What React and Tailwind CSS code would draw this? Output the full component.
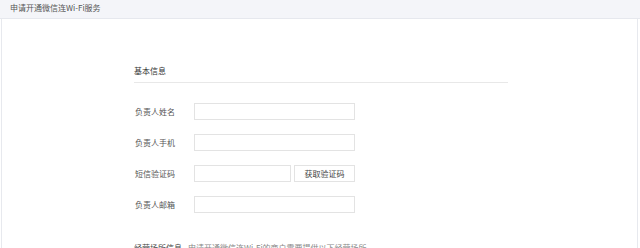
import React from "react";

const font = {
  fontFamily: '"Noto Sans CJK SC", "Noto Sans", "Liberation Sans", sans-serif',
};

const fields = [
  { label: "负责人姓名", name: "name" },
  { label: "负责人手机", name: "phone" },
  { label: "短信验证码", name: "code", withButton: true },
  { label: "负责人邮箱", name: "email" },
];

const App = () => {
  return (
    <div
      className="w-[640px] h-[248px] overflow-hidden bg-white text-[#444] flex flex-col"
      style={font}
    >
      <div className="h-[19px] shrink-0 bg-[#f4f5f9] border-b border-[#e6e8ee] pl-[10px] flex items-center text-[8px] leading-[10px] text-[#555] pb-[3px]">
        申请开通微信连Wi-Fi服务
      </div>
      <div className="flex-1 ml-[1px] mr-[2px] border-x border-[#e7e9ee] bg-white pl-[132px] pt-[47px]">
        <div className="w-[374px] border-b border-[#e8e8e8] pb-[6px] text-[8px] leading-[10px] text-[#333]">
          基本信息
        </div>
        <div className="flex flex-col gap-[14px] pt-[20px]">
          {fields.map((f) => (
            <div key={f.name} className="flex items-center h-[17px]">
              <span className="w-[60px] shrink-0 text-[8px] leading-[10px] text-[#555] pl-[1px]">
                {f.label}
              </span>
              {f.withButton ? (
                <div className="flex gap-[3px]">
                  <input
                    type="text"
                    name={f.name}
                    className="w-[97px] h-[17px] border border-[#e3e3e3] bg-white outline-none"
                  />
                  <button className="w-[61px] h-[17px] border border-[#e3e3e3] bg-white text-[8px] leading-[10px] text-[#444]">
                    获取验证码
                  </button>
                </div>
              ) : (
                <input
                  type="text"
                  name={f.name}
                  className="w-[161px] h-[17px] border border-[#e3e3e3] bg-white outline-none"
                />
              )}
            </div>
          ))}
        </div>
        <div className="flex items-center gap-[6px] mt-[30px] text-[8px] leading-[10px] whitespace-nowrap">
          <span className="text-[#444]">经营场所信息</span>
          <span className="text-[#888]">申请开通微信连Wi-Fi的商户需要提供以下经营场所</span>
        </div>
      </div>
    </div>
  );
};

export default App;
